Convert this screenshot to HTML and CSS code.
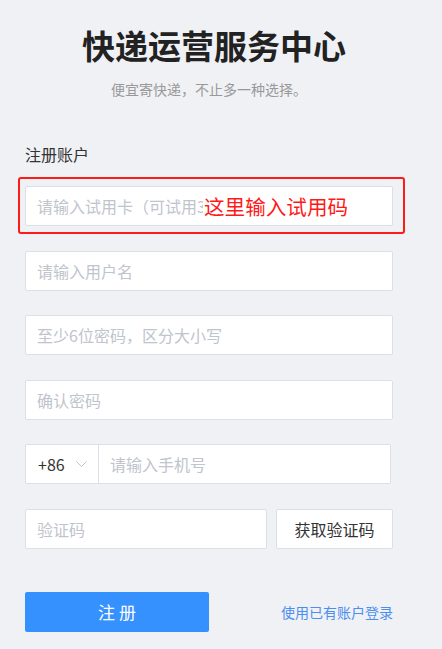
FILE: index.html
```html
<!DOCTYPE html>
<html lang="zh-CN">
<head>
    <meta charset="UTF-8">
    <meta name="viewport" content="width=device-width, initial-scale=1.0">
    <title>快递运营服务中心 - 注册</title>
    <link rel="stylesheet" href="styles.css">
</head>
<body>
    <div class="container">
        <div class="header">
            <h1>快递运营服务中心</h1>
            <p class="slogan">便宜寄快递，不止多一种选择。</p>
        </div>

        <form class="register-form">
            <div class="form-title">注册账户</div>

            <div class="form-row trial-row">
                <input class="form-input" type="text" placeholder="请输入试用卡（可试用3天）">
                <!-- annotation -->
                <div class="mark-box"></div>
                <span class="mark-text">这里输入试用码</span>
            </div>

            <div class="form-row">
                <input class="form-input" type="text" placeholder="请输入用户名">
            </div>

            <div class="form-row">
                <input class="form-input" type="password" placeholder="至少6位密码，区分大小写">
            </div>

            <div class="form-row">
                <input class="form-input" type="password" placeholder="确认密码">
            </div>

            <div class="form-row">
                <div class="phone-group">
                    <div class="phone-prefix">
                        <span>+86</span>
                        <svg class="chevron" width="11" height="6" viewBox="0 0 11 6">
                            <path d="M0.5 0.5 L5.5 5.5 L10.5 0.5" fill="none" stroke="#c0c4cc" stroke-width="1"/>
                        </svg>
                    </div>
                    <input class="phone-input" type="text" placeholder="请输入手机号">
                </div>
            </div>

            <div class="form-row code-row">
                <input class="form-input code-input" type="text" placeholder="验证码">
                <button type="button" class="code-button">获取验证码</button>
            </div>

            <div class="form-actions">
                <button type="submit" class="submit-button">注 册</button>
                <a href="#" class="login-link">使用已有账户登录</a>
            </div>
        </form>
    </div>
</body>
</html>
```

FILE: styles.css
```css
:root {
    --bg-page: #f0f1f5;
    --text-main: #333333;
    --text-muted: #999999;
    --placeholder: #c0c4cc;
    --border: #dcdfe6;
    --accent: #3591fe;
    --link: #4a8ef0;
    --mark: #ff1a1a;
}

* {
    box-sizing: border-box;
}

body {
    margin: 0;
    background-color: var(--bg-page);
    font-family: "Noto Sans CJK SC", "Noto Sans", "Liberation Sans", sans-serif;
    color: var(--text-main);
}

.container {
    width: 368px;
    margin-left: 25px;
}

.header {
    text-align: center;
    padding-top: 22px;
}

h1 {
    margin: 0;
    font-size: 33px;
    line-height: 46px;
    font-weight: 700;
    color: #222222;
    padding-left: 10px;
}

.slogan {
    margin: 11px 0 0;
    font-size: 14px;
    line-height: 20px;
    color: var(--text-muted);
}

.register-form {
    margin-top: 44px;
}

.form-title {
    font-size: 16px;
    line-height: 22px;
    margin-bottom: 21px;
}

.form-row {
    display: flex;
    margin-bottom: 24.5px;
}

.trial-row {
    position: relative;
}

.form-input,
.phone-input {
    width: 100%;
    height: 40px;
    padding: 0 11px;
    border: 1px solid var(--border);
    border-radius: 2px;
    background: #ffffff;
    font-family: inherit;
    font-size: 16px;
    color: var(--text-main);
    outline: none;
}

.form-input::placeholder,
.phone-input::placeholder {
    color: var(--placeholder);
}

/* red annotation over the trial code field */
.mark-box {
    position: absolute;
    left: -7px;
    right: -12px;
    top: -9px;
    bottom: -8px;
    border: 2px solid var(--mark);
    border-radius: 3px;
    pointer-events: none;
}

.mark-text {
    position: absolute;
    left: 178px;
    top: 7px;
    padding-left: 1px;
    background: #ffffff;
    color: var(--mark);
    font-size: 20.6px;
    line-height: 26px;
}

.phone-group {
    display: flex;
    width: 366px;
    height: 40px;
    border: 1px solid var(--border);
    border-radius: 2px;
    background: #ffffff;
}

.phone-prefix {
    display: flex;
    align-items: center;
    gap: 11px;
    width: 73px;
    padding-left: 12px;
    border-right: 1px solid var(--border);
    font-size: 16px;
    color: var(--text-main);
}

.phone-input {
    flex: 1;
    height: 100%;
    border: none;
}

.code-input {
    width: 242px;
    flex: none;
}

.code-button {
    margin-left: auto;
    width: 117px;
    height: 40px;
    border: 1px solid var(--border);
    border-radius: 2px;
    background: #ffffff;
    font-family: inherit;
    font-size: 16px;
    color: var(--text-main);
}

.form-actions {
    display: flex;
    align-items: center;
    justify-content: space-between;
    margin-top: 43px;
}

.submit-button {
    width: 184px;
    height: 40px;
    border: none;
    border-radius: 2px;
    background-color: var(--accent);
    font-family: inherit;
    font-size: 17px;
    color: #ffffff;
}

.login-link {
    font-size: 14px;
    color: var(--link);
    text-decoration: none;
}
```
